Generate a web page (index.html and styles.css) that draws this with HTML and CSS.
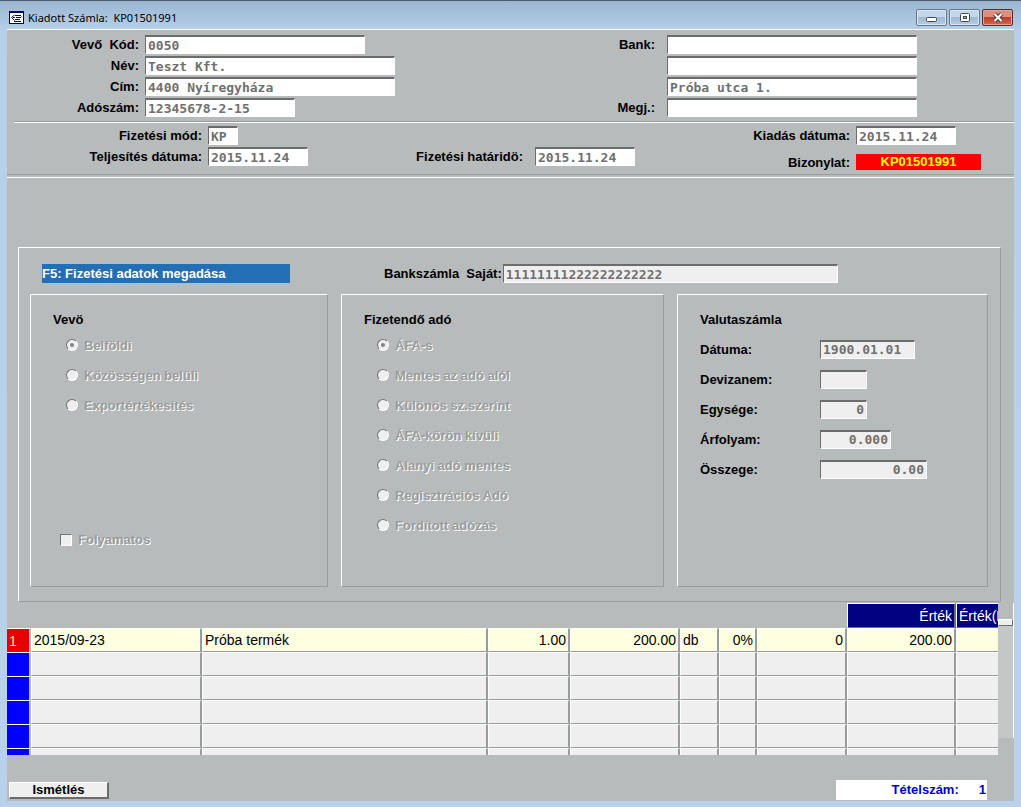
FILE: index.html
```html
<!DOCTYPE html>
<html lang="hu">

<head>
  <meta charset="UTF-8">
  <title>Kiadott Számla: KP01501991</title>
  <link rel="stylesheet" href="styles.css">
</head>
<body>
  <div class="window">
    <header class="titlebar">
      <svg class="app-icon" width="15" height="13" viewBox="0 0 15 13">
        <rect x="0.5" y="0.5" width="14" height="12" fill="#fff" stroke="#000066"/>
        <path d="M0 1.5H15" stroke="#000066"/>
        <path d="M6 4.5H11M7 6.5H12M6 8.5H11M5 10.5H12M5.5 4L2.5 6.5L5.5 9.5M4 6.5H6M11 4L12.500 5.500" fill="none" stroke="#000066"/>
      </svg>
      <h1>Kiadott Számla:&nbsp; KP01501991</h1>
      <div class="window-buttons">
        <button type="button" aria-label="Kis méret">
          <svg width="14" height="11" viewBox="0 0 14 11"><rect x="1.5" y="5.5" width="10" height="4" rx="1" fill="#fff" stroke="#45484f"/></svg>
        </button>
        <button type="button" aria-label="Teljes méret">
          <svg width="14" height="11" viewBox="0 0 14 11"><rect x="2.5" y="1.5" width="9" height="8" rx="1" fill="#fff" stroke="#45484f"/><rect x="5.5" y="4.5" width="3" height="2" fill="#9fb8d2" stroke="#45484f"/></svg>
        </button>
        <button type="button" class="close" aria-label="Bezárás">
          <svg width="14" height="11" viewBox="0 0 14 11"><path d="M3.5 2L10.5 9M10.5 2L3.5 9" stroke="#4a3c44" stroke-width="4"/><path d="M3.5 2L10.5 9M10.5 2L3.5 9" stroke="#fff" stroke-width="2"/></svg>
        </button>
      </div>
    </header>

    <main class="content">
      <section class="partner">
        <label for="kod">Vevő&nbsp; Kód:</label>
        <input id="kod" class="w220" type="text" value="0050" readonly>
        <label for="bank" class="wide-gap">Bank:</label>
        <input id="bank" class="w250" type="text" readonly>

        <label for="nev">Név:</label>
        <input id="nev" class="w250" type="text" value="Teszt Kft." readonly>
        <span></span>
        <input class="w250" type="text" aria-label="Bank 2" readonly>

        <label for="cim">Cím:</label>
        <input id="cim" class="w250" type="text" value="4400 Nyíregyháza" readonly>
        <span></span>
        <input class="w250" type="text" value="Próba utca 1." aria-label="Utca" readonly>

        <label for="adoszam">Adószám:</label>
        <input id="adoszam" class="w150" type="text" value="12345678-2-15" readonly>
        <label for="megj" class="wide-gap">Megj.:</label>
        <input id="megj" class="w250" type="text" readonly>
      </section>

      <hr class="groove">

      <section class="payment">
        <label for="mod">Fizetési mód:</label>
        <input id="mod" class="w30" type="text" value="KP" readonly>
        <span></span>
        <span></span>
        <label for="kiadas">Kiadás dátuma:</label>
        <input id="kiadas" class="w100" type="text" value="2015.11.24" readonly>

        <label for="teljesites">Teljesítés dátuma:</label>
        <input id="teljesites" class="w100" type="text" value="2015.11.24" readonly>
        <label for="hatarido" class="wide-gap">Fizetési határidö:</label>
        <input id="hatarido" class="w100" type="text" value="2015.11.24" readonly>
        <label for="bizonylat" class="low">Bizonylat:</label>
        <output id="bizonylat" class="voucher low">KP01501991</output>
      </section>

      <section class="details">
        <div class="details-top">
          <h2 class="f5">F5: Fizetési adatok megadása</h2>
          <label for="szamla">Bankszámla&nbsp; Saját:</label>
          <input id="szamla" class="flat account" type="text" value="11111111222222222222" readonly>
        </div>

        <div class="panels">
          <fieldset class="panel" disabled>
            <h3>Vevö</h3>
            <div class="options">
              <label><input type="radio" name="vevo" checked> Belföldi</label>
              <label><input type="radio" name="vevo"> Közösségen belüli</label>
              <label><input type="radio" name="vevo"> Exportértékesítés</label>
            </div>
            <label class="continuous"><input type="checkbox"> Folyamatos</label>
          </fieldset>

          <fieldset class="panel" disabled>
            <h3>Fizetendő adó</h3>
            <div class="options">
              <label><input type="radio" name="ado" checked> ÁFA-s</label>
              <label><input type="radio" name="ado"> Mentes az adó alól</label>
              <label><input type="radio" name="ado"> Különös sz.szerint</label>
              <label><input type="radio" name="ado"> ÁFA-körön kívüli</label>
              <label><input type="radio" name="ado"> Alanyi adó mentes</label>
              <label><input type="radio" name="ado"> Regisztrációs Adó</label>
              <label><input type="radio" name="ado"> Fordított adózás</label>
            </div>
          </fieldset>

          <div class="panel">
            <h3>Valutaszámla</h3>
            <div class="currency">
              <label for="datuma">Dátuma:</label>
              <input id="datuma" class="flat w95" type="text" value="1900.01.01" readonly>
              <label for="devizanem">Devizanem:</label>
              <input id="devizanem" class="flat w47" type="text" readonly>
              <label for="egysege">Egysége:</label>
              <input id="egysege" class="flat num w47" type="text" value="0" readonly>
              <label for="arfolyam">Árfolyam:</label>
              <input id="arfolyam" class="flat num w71" type="text" value="0.000" readonly>
              <label for="osszege">Összege:</label>
              <input id="osszege" class="flat num w107" type="text" value="0.00" readonly>
            </div>
          </div>
        </div>
      </section>

      <section class="items">
        <div class="table-wrap">
          <table>
            <colgroup>
              <col class="c-no"><col class="c-code"><col><col class="c-qty"><col class="c-price">
              <col class="c-unit"><col class="c-vat"><col class="c-disc"><col class="c-value"><col class="c-gross">
            </colgroup>
            <thead>
              <tr>
                <td colspan="8"></td>
                <th scope="col">Érték</th>
                <th scope="col" class="cut">Érték(F</th>
              </tr>
            </thead>
            <tbody>
              <tr class="current">
                <th scope="row">1</th><td>2015/09-23</td><td>Próba termék</td><td class="num">1.00</td><td class="num">200.00</td>
                <td>db</td><td class="num">0%</td><td class="num">0</td><td class="num">200.00</td><td></td>
              </tr>
              <tr><th></th><td></td><td></td><td></td><td></td><td></td><td></td><td></td><td></td><td></td></tr>
              <tr><th></th><td></td><td></td><td></td><td></td><td></td><td></td><td></td><td></td><td></td></tr>
              <tr><th></th><td></td><td></td><td></td><td></td><td></td><td></td><td></td><td></td><td></td></tr>
              <tr><th></th><td></td><td></td><td></td><td></td><td></td><td></td><td></td><td></td><td></td></tr>
              <tr class="partial"><th></th><td></td><td></td><td></td><td></td><td></td><td></td><td></td><td></td><td></td></tr>
            </tbody>
          </table>
        </div>
        <div class="scrollbar"><div class="thumb"></div></div>
      </section>

      <footer class="footer">
        <button type="button" class="repeat">Ismétlés</button>
        <div class="count"><span>Tételszám:</span><span>1</span></div>
      </footer>
    </main>
  </div>
</body>
</html>
```
FILE: styles.css
```css
* { box-sizing: border-box; }

body {
  margin: 0;
  font-family: "Liberation Sans", Arial, sans-serif;
  font-size: 13px;
  color: #000;
}

h1, h2, h3 { margin: 0; font-size: 13px; }
label { font-weight: bold; white-space: nowrap; }

/* window frame */
.window {
  display: flex;
  flex-direction: column;
  min-height: 100vh;
  padding: 0 7px 6px;
  background: linear-gradient(#9bb6d1 0, #b7d0ea 30px, #b9d1ea 100%);
  border-top: 1px solid #4e5a66;
}

.titlebar {
  display: flex;
  align-items: center;
  height: 28px;
  padding: 4px 0 0 2px;
}
.app-icon { margin-right: 4px; }
.titlebar h1 {
  flex: 1;
  font-family: "Noto Sans", "Open Sans", sans-serif;
  font-size: 11px;
  font-weight: normal;
}
.window-buttons { display: flex; gap: 2px; padding-right: 1px; }
.window-buttons button {
  display: flex;
  align-items: center;
  justify-content: center;
  width: 31px;
  height: 17px;
  padding: 0;
  border: 1px solid #63788f;
  border-radius: 2px;
  box-shadow: inset 0 0 0 1px #d9e7f5;
  background: linear-gradient(#c3d6ea 50%, #9fb9d3 50%, #b4cde6);
}
.window-buttons .close {
  border-color: #5b2a2a;
  box-shadow: inset 0 0 0 1px #e2a397;
  background: linear-gradient(#dc8f7f 50%, #bd3f2b 50%, #d0694f);
}

.content {
  flex: 1;
  display: flex;
  flex-direction: column;
  background: #b8bbbb;
  border-top: 1px solid #fff;
}

/* text boxes */
input[type="text"] {
  height: 19px;
  padding: 0 2px;
  border: 1px solid #fff;
  border-top: 2px solid #6c6c6c;
  border-left-color: #6c6c6c;
  border-radius: 0;
  outline: 0;
  background: #fff;
  color: #707070;
  font-family: "DejaVu Sans Mono", "Liberation Mono", monospace;
  font-size: 13px;
  font-weight: bold;
}
input[type="text"].flat { background: #efefef; }
input[type="text"].num { text-align: right; }
.w30 { width: 30px; }
.w47 { width: 47px; }
.w71 { width: 71px; }
.w95 { width: 95px; }
.w100 { width: 100px; }
.w107 { width: 107px; }
.w150 { width: 150px; }
.w220 { width: 220px; }
.w250 { width: 250px; }

/* customer */
.partner {
  display: grid;
  grid-template-columns: 132px 250px 1fr 250px;
  gap: 2px 6px;
  align-items: center;
  padding: 5px 97px 4px 0;
}
.partner label, .payment label { text-align: right; }
.wide-gap { padding-right: 6px; }

.groove {
  width: calc(100% - 7px);
  margin: 0 0 0 7px;
  border: 0;
  border-top: 1px solid #999c9c;
  border-bottom: 1px solid #fff;
}

/* payment */
.payment {
  display: grid;
  grid-template-columns: 195px 100px 215px 100px 1fr 125px;
  gap: 2px 6px;
  align-items: center;
  padding: 3px 33px 11px 0;
  border-bottom: 1px solid #fff;
  box-shadow: inset 0 -2px 0 #b8bbbb, inset 0 -3px 0 #999c9c;
}
.payment .low { align-self: end; margin-bottom: -4px; }
.voucher {
  background: #f00;
  color: #ff0;
  font-weight: bold;
  line-height: 16px;
  text-align: center;
}

/* invoice details */
.details {
  margin: 69px 13px 0 11px;
  padding: 16px 12px 14px 11px;
  border: 1px solid;
  border-color: #fff #999c9c #999c9c #fff;
}
.details-top {
  display: flex;
  align-items: center;
  margin-bottom: 11px;
  padding-left: 12px;
}
.f5 {
  width: 248px;
  margin-right: 94px;
  background: #236fb5;
  color: #fff;
  line-height: 19px;
}
.account { width: 335px; margin-left: 1px; }

.panels {
  display: grid;
  grid-template-columns: 298fr 323fr 311fr;
  gap: 13px;
}
.panel {
  min-width: 0;
  min-height: 293px;
  margin: 0;
  padding: 16px 22px;
  border: 1px solid;
  border-color: #fff #999c9c #999c9c #fff;
}
.panel h3 { line-height: 18px; }
.options { display: grid; grid-auto-rows: 30px; padding: 1px 0 0 13px; }
.options label, .continuous {
  display: flex;
  align-items: center;
  gap: 6px;
  color: #999c9c;
  text-shadow: 1px 1px 0 #fff;
}
.continuous { margin-top: 112px; padding-left: 7px; }

input[type="radio"], input[type="checkbox"] {
  appearance: none;
  display: grid;
  place-items: center;
  width: 12px;
  height: 12px;
  margin: 0;
  border: 1px solid;
  border-color: #707373 #fff #fff #707373;
  background: #efefef;
}
input[type="radio"] { border-radius: 50%; }
input[type="radio"]:checked::before {
  content: "";
  width: 4px;
  height: 4px;
  border-radius: 50%;
  background: #808383;
}

.currency {
  display: grid;
  grid-template-columns: 120px 1fr;
  grid-auto-rows: 30px;
  align-items: center;
  padding-top: 5px;
}

/* invoice lines */
.items { display: flex; margin-top: 1px; }
.table-wrap { flex: 1; overflow: hidden; }
table {
  width: 100%;
  table-layout: fixed;
  border-collapse: separate;
  border-spacing: 0;
  font-size: 14px;
}
.c-no { width: 24px; }
.c-code { width: 171px; }
.c-qty { width: 82px; }
.c-price { width: 110px; }
.c-unit { width: 39px; }
.c-vat { width: 38px; }
.c-disc { width: 90px; }
.c-value { width: 109px; }
.c-gross { width: 42px; }

td, th {
  height: 24px;
  padding: 0 2px;
  overflow: hidden;
  text-align: left;
  font-weight: normal;
  white-space: nowrap;
}
thead td { border: 0; }
thead th {
  height: 25px;
  border: 1px solid #fff;
  border-bottom-color: #6c6c6c;
  border-right: 2px solid #6c6c6c;
  background: #000080;
  color: #fff;
  text-align: right;
}
thead th.cut { border-right: 0; text-align: left; }
tbody td {
  border-top: 1px solid #fff;
  border-left: 1px solid #fff;
  border-right: 2px solid #999c9c;
  border-bottom: 1px solid #999c9c;
  background: #efefef;
}
tbody td:last-child { border-right: 0; }
tbody th {
  border-top: 1px solid #fff;
  border-right: 2px solid #b8bbbb;
  background: #00f;
  background-clip: padding-box;
}
.current td { background: #ffffe1; }
.current th { background-color: #e60000; color: #ffe9a0; }
tbody .num { text-align: right; }
.partial td, .partial th { height: 7px; border-bottom: 0; }

.scrollbar {
  width: 16px;
  height: 135px;
  padding-top: 16px;
  background: linear-gradient(#b8bbbb 22px, #c5c6c6 22px);
  border-right: 1px solid #fff;
}
.thumb {
  height: 7px;
  border: 1px solid;
  border-color: #fff #6c6c6c #6c6c6c #fff;
  background: #efefef;
}

/* bottom bar */
.footer {
  display: flex;
  align-items: center;
  justify-content: space-between;
  margin-top: auto;
  padding: 0 27px 1px 2px;
}
.repeat {
  width: 100px;
  height: 17px;
  padding: 0;
  border: 1px solid #fff;
  border-right: 2px solid #6c6c6c;
  border-bottom: 2px solid #6c6c6c;
  background: #efefef;
  color: #000;
  font-family: inherit;
  font-size: 13px;
  font-weight: bold;
  line-height: 14px;
}
.count {
  display: flex;
  justify-content: flex-end;
  gap: 20px;
  width: 151px;
  padding-right: 1px;
  background: #fff;
  color: #0000c8;
  font-weight: bold;
  line-height: 20px;
}
```
